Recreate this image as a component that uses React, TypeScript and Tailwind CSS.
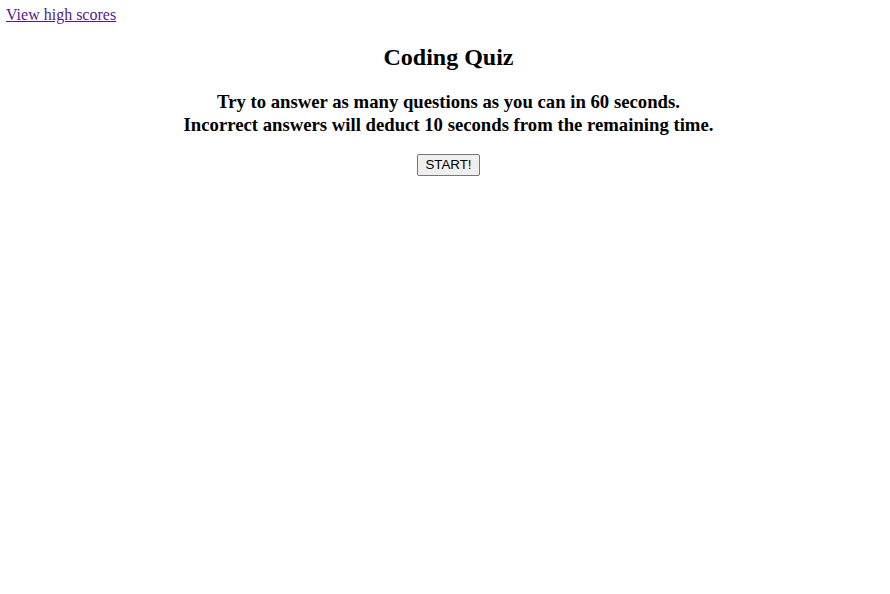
import React from "react";

export default function App() {
  return (
    <div className="min-h-[594px] bg-white font-['Liberation_Serif','Times_New_Roman',serif] text-black">
      <div className="pl-[6px] pt-[6px] text-[16px] leading-[18px]">
        <a href="#" className="text-[#551a8b] underline">View high scores</a>
      </div>
      <div className="flex flex-col items-center pl-[7px]">
        <h1 className="mt-[19px] text-[24px] font-bold leading-[28px]">Coding Quiz</h1>
        <div className="mt-[19px] text-center text-[18.72px] font-bold leading-[23px]">
          <p>Try to answer as many questions as you can in 60 seconds.</p>
          <p>Incorrect answers will deduct 10 seconds from the remaining time.</p>
        </div>
        <button className="mt-[18px] rounded-[2px] border border-[#767676] bg-[#efefef] px-[7px] py-[2px] font-['Liberation_Sans',Arial,sans-serif] text-[13.33px] leading-[16px] text-black">
          START!
        </button>
      </div>
    </div>
  );
}
